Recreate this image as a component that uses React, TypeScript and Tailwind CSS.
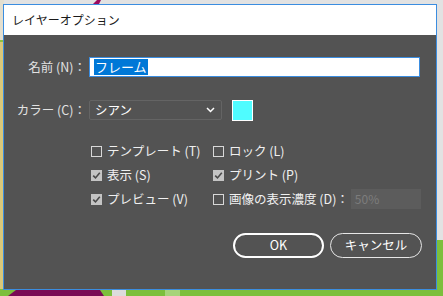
import React from "react";

const font = { fontFamily: '"Noto Sans CJK JP", "Noto Sans", sans-serif' };

function Check({ checked, label }: { checked?: boolean; label: string }) {
  return (
    <div className="flex items-center gap-[5px] h-[24px]">
      {checked ? (
        <div className="w-[11px] h-[11px] bg-[#c4c4c4] flex items-center justify-center">
          <svg width="9" height="9" viewBox="0 0 9 9">
            <path d="M1.2 4.6 L3.5 6.9 L7.8 1.8" fill="none" stroke="#4a4a4a" strokeWidth="1.6" />
          </svg>
        </div>
      ) : (
        <div className="w-[11px] h-[11px] border border-[#d8d8d8]" />
      )}
      <span className="text-[12.5px] text-[#f0f0f0] leading-none">{label}</span>
    </div>
  );
}

export default function App() {
  return (
    <div className="relative w-[443px] h-[296px] overflow-hidden bg-[#dedede]" style={font}>
      {/* artwork behind the dialog */}
      <svg className="absolute inset-0" width="443" height="296" viewBox="0 0 443 296">
        <rect x="0" y="0" width="443" height="296" fill="#e2e2e2" />
        <rect x="0" y="0" width="4" height="296" fill="#d9c77a" />
        <rect x="0" y="0" width="4" height="40" fill="#e4dfcf" />
        <rect x="0" y="40" width="4" height="2" fill="#8cc040" />
        <path d="M93 4 L97 0 L101 0 L99 4 Z" fill="#9b0a5e" />
        <rect x="437" y="240" width="6" height="56" fill="#7cbf3c" />
        <rect x="0" y="289" width="443" height="7" fill="#7cbf3c" />
        <path d="M8 296 L16 290 L100 290 L104 296 Z" fill="#7a0b55" />
        <rect x="112" y="290" width="14" height="6" fill="#dcdcdc" />
        <rect x="165" y="290" width="15" height="6" fill="#a6d47a" />
      </svg>

      {/* dialog */}
      <div className="relative ml-[3px] mt-[4px] w-[434px] h-[286px] border border-[#3b8de0] flex flex-col">
        <div className="h-[30px] bg-white flex items-center pl-[8px]">
          <span className="text-[12px] text-[#1a1a1a]">レイヤーオプション</span>
        </div>

        <div className="flex-1 bg-[#535353] flex flex-col pt-[22px]">
          {/* name */}
          <div className="flex items-center h-[20px]">
            <div className="w-[83px] text-right text-[12.5px] text-[#e2e2e2] pr-[1px]">名前 (N)：</div>
            <div className="ml-[2px] w-[331px] h-[20px] bg-white border border-[#3b8de0] flex items-center pl-[4px]">
              <span className="bg-[#0078d7] text-white text-[13px] leading-[16px] px-[1px]">フレーム</span>
            </div>
          </div>

          {/* color */}
          <div className="flex items-center h-[20px] mt-[23px]">
            <div className="w-[83px] text-right text-[12.5px] text-[#e2e2e2] pr-[1px]">カラー (C)：</div>
            <div className="ml-[2px] w-[133px] h-[20px] border border-[#646464] rounded-[2px] flex items-center justify-between pl-[5px] pr-[6px]">
              <span className="text-[12.5px] text-white">シアン</span>
              <svg width="9" height="6" viewBox="0 0 9 6">
                <path d="M1 1 L4.5 4.5 L8 1" fill="none" stroke="#ffffff" strokeWidth="1.5" />
              </svg>
            </div>
            <div className="ml-[10px] w-[21px] h-[21px] bg-[#4ffcff] border border-white" />
          </div>

          {/* options */}
          <div className="mt-[19px] ml-[87px] grid grid-cols-[122px_auto]">
            <Check label="テンプレート (T)" />
            <Check label="ロック (L)" />
            <Check checked label="表示 (S)" />
            <Check checked label="プリント (P)" />
            <Check checked label="プレビュー (V)" />
            <div className="flex items-center">
              <Check label="画像の表示濃度 (D)：" />
              <div className="ml-[2px] w-[70px] h-[20px] bg-[#5c5c5c] flex items-center pl-[4px]">
                <span className="text-[12px] text-[#7c7c7c]">50%</span>
              </div>
            </div>
          </div>

          {/* buttons */}
          <div className="mt-[22px] flex justify-end gap-[6px] pr-[14px]">
            <button className="w-[91px] h-[25px] rounded-full border-2 border-white text-[12.5px] text-white">
              OK
            </button>
            <button className="w-[92px] h-[25px] rounded-full border border-[#e6e6e6] text-[12.5px] text-white">
              キャンセル
            </button>
          </div>
        </div>
      </div>
    </div>
  );
}
